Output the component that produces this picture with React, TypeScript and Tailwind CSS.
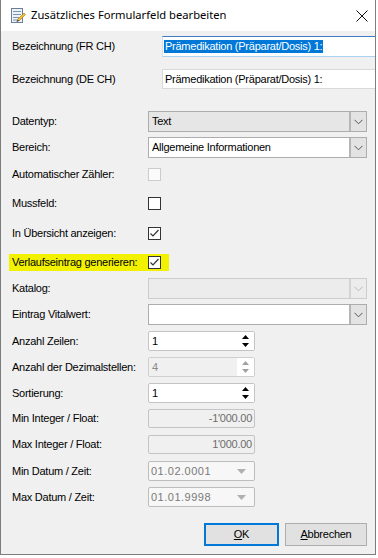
import React from "react";

const F = { fontFamily: '"Liberation Sans", Arial, sans-serif' };

function Chevron({ disabled }: { disabled?: boolean }) {
  return (
    <svg width="9" height="6" viewBox="0 0 9 6">
      <polyline points="0.5,0.8 4.5,4.8 8.5,0.8" fill="none" stroke={disabled ? "#b8b8b8" : "#555"} strokeWidth="1" />
    </svg>
  );
}

function Combo({ text, bg, disabled }: { text?: string; bg: string; disabled?: boolean }) {
  return (
    <div className={`flex h-full w-[219px] items-stretch border ${disabled ? "border-[#cccccc]" : "border-[#adadad]"} ${bg}`}>
      <div className="flex flex-1 items-center pl-[3px] text-[11px] text-black">{text}</div>
      <div className={`flex w-[17px] items-center justify-center border-l-2 ${disabled ? "border-[#d4d4d4] bg-[#ececec]" : "border-[#b6b6b6] bg-[#e3e3e3]"}`}>
        <Chevron disabled={disabled} />
      </div>
    </div>
  );
}

function Spin({ disabled }: { disabled?: boolean }) {
  const c = disabled ? "#a0a0a0" : "#000";
  return (
    <div className="flex w-[17px] flex-col items-center justify-between py-[3px] bg-white">
      <svg width="7" height="4" viewBox="0 0 7 4"><polygon points="3.5,0 7,4 0,4" fill={c} /></svg>
      <svg width="7" height="4" viewBox="0 0 7 4"><polygon points="0,0 7,0 3.5,4" fill={c} /></svg>
    </div>
  );
}

function Numeric({ value, disabled }: { value: string; disabled?: boolean }) {
  return (
    <div className={`flex h-full w-[107px] items-stretch rounded-[2px] border ${disabled ? "border-[#cfcfcf]" : "border-[#c4c4c4]"} bg-white`}>
      <div className={`flex flex-1 items-center pl-[3px] text-[11px] ${disabled ? "bg-[#f0f0f0] text-[#8a8a8a]" : "text-black"}`}>{value}</div>
      <Spin disabled={disabled} />
    </div>
  );
}

function Check({ checked, disabled }: { checked?: boolean; disabled?: boolean }) {
  return (
    <div className={`flex h-[13px] w-[13px] items-center justify-center border ${disabled ? "border-[#cccccc] bg-[#fbfbfb]" : "border-[#333333] bg-white"}`}>
      {checked && (
        <svg width="11" height="11" viewBox="0 0 11 11">
          <polyline points="1.5,5.5 4,8 9.5,2" fill="none" stroke="#333" strokeWidth="1.2" />
        </svg>
      )}
    </div>
  );
}

function Label({ children, w = "w-[136px]" }: { children: React.ReactNode; w?: string }) {
  return <div className={`${w} shrink-0 text-[11px] text-black`}>{children}</div>;
}

export default function App() {
  return (
    <div className="h-[558px] w-[378px] bg-white tracking-[-0.25px]" style={F}>
      <div className="flex h-[555px] w-[376px] flex-col overflow-hidden border-x border-b border-[#7d7d7d] bg-[#f0f0f0]">
        {/* Title bar */}
        <div className="flex h-[31px] shrink-0 items-center bg-white pl-[9px]">
          <svg width="16" height="17" viewBox="0 0 16 17">
            <rect x="1.5" y="1.5" width="11" height="14" fill="#eef3fa" stroke="#6b7f99" />
            <line x1="3" y1="4.5" x2="11" y2="4.5" stroke="#7d93b3" />
            <line x1="3" y1="7.5" x2="11" y2="7.5" stroke="#7d93b3" />
            <line x1="3" y1="10.5" x2="9" y2="10.5" stroke="#7d93b3" />
            <line x1="3" y1="13" x2="7" y2="13" stroke="#7d93b3" />
            <polygon points="14,6 15.5,7.5 9,14 7.5,12.5" fill="#f0c030" stroke="#a07010" strokeWidth="0.6" />
            <polygon points="7.5,12.5 9,14 6.5,15" fill="#333" />
          </svg>
          <span className="ml-[5px] text-[11.2px] tracking-normal text-black" style={{ fontFamily: '"Noto Sans", "Open Sans", sans-serif' }}>
            Zusätzliches Formularfeld bearbeiten
          </span>
          <div className="flex-1" />
          <svg width="12" height="12" viewBox="0 0 12 12" className="mr-[7px]">
            <line x1="0.5" y1="0.5" x2="11.5" y2="11.5" stroke="#111" strokeWidth="1" />
            <line x1="11.5" y1="0.5" x2="0.5" y2="11.5" stroke="#111" strokeWidth="1" />
          </svg>
        </div>

        <div className="flex flex-col pl-[11px]">
          {/* FR */}
          <div className="mt-[5px] flex h-[21px] items-center">
            <Label w="w-[150px]">Bezeichnung (FR CH)</Label>
            <div className="flex h-full flex-1 items-center border-t border-t-[#3d7cc0] border-b border-b-[#a9d3f0] border-l border-l-[#cfe2f3] bg-white pl-[1px]">
              <span className="bg-[#0078d7] px-[1px] text-[11px] leading-[13px] text-white">Prämedikation (Präparat/Dosis) 1:</span>
            </div>
          </div>
          {/* DE */}
          <div className="mt-[12px] flex h-[20px] items-center">
            <Label w="w-[150px]">Bezeichnung (DE CH)</Label>
            <div className="flex h-full flex-1 items-center border-l border-t border-b border-[#d9d9d9] bg-white pl-[2px] text-[11px]">
              Prämedikation (Präparat/Dosis) 1:
            </div>
          </div>
          {/* Datentyp */}
          <div className="mt-[22px] flex h-[21px] items-center">
            <Label>Datentyp:</Label>
            <Combo text="Text" bg="bg-[#e6e6e6]" />
          </div>
          <div className="mt-[5px] flex h-[21px] items-center">
            <Label>Bereich:</Label>
            <Combo text="Allgemeine Informationen" bg="bg-white" />
          </div>
          <div className="mt-[10px] flex h-[13px] items-center">
            <Label>Automatischer Zähler:</Label>
            <Check disabled />
          </div>
          <div className="mt-[16px] flex h-[13px] items-center">
            <Label>Mussfeld:</Label>
            <Check />
          </div>
          <div className="mt-[17px] flex h-[13px] items-center">
            <Label>In Übersicht anzeigen:</Label>
            <Check checked />
          </div>
          <div className="-ml-[3px] mt-[14px] flex h-[17px] w-[160px] items-center bg-[#f2f200] pl-[3px]">
            <Label>Verlaufseintrag generieren:</Label>
            <Check checked />
          </div>
          <div className="mt-[7px] flex h-[21px] items-center">
            <Label>Katalog:</Label>
            <Combo bg="bg-[#ececec]" disabled />
          </div>
          <div className="mt-[5px] flex h-[21px] items-center">
            <Label>Eintrag Vitalwert:</Label>
            <Combo bg="bg-white" />
          </div>
          <div className="mt-[6px] flex h-[20px] items-center">
            <Label>Anzahl Zeilen:</Label>
            <Numeric value="1" />
          </div>
          <div className="mt-[6px] flex h-[20px] items-center">
            <Label>Anzahl der Dezimalstellen:</Label>
            <Numeric value="4" disabled />
          </div>
          <div className="mt-[6px] flex h-[20px] items-center">
            <Label>Sortierung:</Label>
            <Numeric value="1" />
          </div>
          <div className="mt-[6px] flex h-[19px] items-center">
            <Label>Min Integer / Float:</Label>
            <div className="flex h-full w-[107px] items-center justify-end rounded-[2px] border border-[#c4c4c4] bg-[#f0f0f0] pr-[2px] text-[11px] text-[#6d6d6d]">-1'000.00</div>
          </div>
          <div className="mt-[7px] flex h-[19px] items-center">
            <Label>Max Integer / Float:</Label>
            <div className="flex h-full w-[107px] items-center justify-end rounded-[2px] border border-[#c4c4c4] bg-[#f0f0f0] pr-[2px] text-[11px] text-[#6d6d6d]">1'000.00</div>
          </div>
          <div className="mt-[7px] flex h-[20px] items-center">
            <Label>Min Datum / Zeit:</Label>
            <div className="flex h-full w-[107px] items-center justify-between rounded-[2px] border border-[#bdbdbd] bg-[#f7f7f7] pl-[2px] pr-[8px] text-[11px] tracking-[0.5px] text-[#7a7a7a]">
              <span>01.02.0001</span>
              <svg width="9" height="5" viewBox="0 0 9 5"><polygon points="0,0 9,0 4.5,5" fill="#b0b0b0" /></svg>
            </div>
          </div>
          <div className="mt-[6px] flex h-[20px] items-center">
            <Label>Max Datum / Zeit:</Label>
            <div className="flex h-full w-[107px] items-center justify-between rounded-[2px] border border-[#bdbdbd] bg-[#f7f7f7] pl-[2px] pr-[8px] text-[11px] tracking-[0.5px] text-[#7a7a7a]">
              <span>01.01.9998</span>
              <svg width="9" height="5" viewBox="0 0 9 5"><polygon points="0,0 9,0 4.5,5" fill="#b0b0b0" /></svg>
            </div>
          </div>
          <div className="mt-[16px] flex h-[23px] items-center">
            <div className="ml-[192px] flex h-full w-[75px] items-center justify-center border-2 border-[#0078d7] bg-[#e1e1e1] text-[11px] text-black">
              <span><u>O</u>K</span>
            </div>
            <div className="ml-[6px] flex h-full w-[82px] items-center justify-center border border-[#adadad] bg-[#e1e1e1] text-[11px] text-black">
              <span><u>A</u>bbrechen</span>
            </div>
          </div>
        </div>
      </div>
    </div>
  );
}
